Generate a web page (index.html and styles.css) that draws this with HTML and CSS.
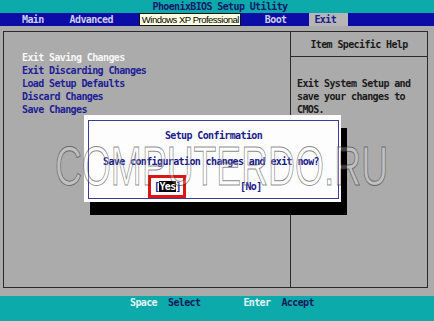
FILE: index.html
```html
<!DOCTYPE html>
<html lang="en">
<head>
    <meta charset="UTF-8">
    <meta name="viewport" content="width=device-width, initial-scale=1.0">
    <title>PhoenixBIOS Setup Utility</title>
    <link rel="stylesheet" href="styles.css">
</head>
<body>
    <div class="screen">
        <div class="title">PhoenixBIOS Setup Utility</div>
        <div class="menubar">
            <span class="tab tab-main">Main</span>
            <span class="tab tab-adv">Advanced</span>
            <span class="tooltip">Windows XP Professional</span>
            <span class="tab tab-boot">Boot</span>
            <span class="tab tab-exit">Exit</span>
        </div>
        <div class="body">
            <div class="panel">
                <div class="items">
                    <div class="item current">Exit Saving Changes</div>
                    <div class="item">Exit Discarding Changes</div>
                    <div class="item">Load Setup Defaults</div>
                    <div class="item">Discard Changes</div>
                    <div class="item">Save Changes</div>
                </div>
                <div class="help">
                    <div class="help-head">Item Specific Help</div>
                    <div class="help-text">
                        <div>Exit System Setup and</div>
                        <div>save your changes to</div>
                        <div>CMOS.</div>
                    </div>
                </div>
            </div>
        </div>
        <div class="keys">
            <span class="key key-space">Space</span>
            <span class="act act-select">Select</span>
            <span class="key key-enter">Enter</span>
            <span class="act act-accept">Accept</span>
        </div>

        <!-- окно подтверждения поверх экрана -->
        <div class="dialog">
            <div class="dialog-inner">
                <div class="dialog-title">Setup Confirmation</div>
                <div class="dialog-text">Save configuration changes and exit now?</div>
                <div class="dialog-buttons">
                    <span class="btn btn-yes">[<span class="sel">Yes</span>]</span>
                    <span class="btn btn-no">[No]</span>
                </div>
            </div>
        </div>

        <div class="watermark">COMPUTERDO.RU</div>
    </div>
</body>
</html>
```

FILE: styles.css
```css
body {
    margin: 0;
    padding: 0;
    background-color: #ababab;
    font-family: "DejaVu Sans Mono", "Liberation Mono", monospace;
    font-size: 10px;
    font-weight: bold;
    letter-spacing: -0.62px;
}
.screen {
    position: relative;
    width: 434px;
    height: 321px;
    overflow: hidden;
    background-color: #ababab;
}
.title {
    height: 13px;
    line-height: 13px;
    background-color: #0caaaa;
    color: #16186a;
    text-align: center;
    padding-left: 6px;
}
.menubar {
    height: 13px;
    line-height: 13px;
    background-color: #0c0ca6;
    display: flex;
    padding-left: 22px;
}
.tab {
    color: #cfcfe6;
    white-space: pre;
}
.tab-adv {
    margin-left: 26px;
}
.tab-boot {
    margin-left: 24px;
}
.tab-exit {
    margin-left: 23px;
    padding: 0 12px 0 5px;
    background-color: #b6b6b6;
    color: #1c1c8a;
}
.tooltip {
    margin-left: 26px;
    box-sizing: border-box;
    width: 102px;
    height: 13px;
    line-height: 11px;
    background-color: #ffffe1;
    border: 1px solid #111;
    color: #000;
    font-family: "Liberation Sans", Arial, sans-serif;
    font-weight: normal;
    font-size: 9.5px;
    letter-spacing: -0.5px;
    padding-left: 2px;
    white-space: nowrap;
    overflow: hidden;
}
.body {
    height: 270px;
    box-sizing: border-box;
    padding: 5px 6px 8px 3px;
}
.panel {
    height: 257px;
    box-sizing: border-box;
    border: 1px solid #2a2a2a;
    display: grid;
    grid-template-columns: 286px 1fr;
}
.items {
    padding: 19px 0 0 18px;
}
.item {
    height: 13px;
    line-height: 13px;
    color: #1e1e96;
}
.item.current {
    color: #f6f6f6;
}
.help {
    border-left: 1px solid #2a2a2a;
}
.help-head {
    height: 24px;
    line-height: 25px;
    text-align: center;
    color: #1a1a1a;
    border-bottom: 1px solid #2a2a2a;
}
.help-text {
    padding: 20px 0 0 6px;
    color: #1a1a1a;
    line-height: 13px;
}
.keys {
    height: 25px;
    line-height: 13px;
    background-color: #0caaaa;
    display: flex;
    padding-left: 130px;
}
.key {
    color: #e6f4f4;
}
.act {
    color: #15185e;
    margin-left: 11px;
}
.key-enter {
    margin-left: 43px;
}
.dialog {
    position: absolute;
    left: 84px;
    top: 115px;
    width: 257px;
    height: 87px;
    box-sizing: border-box;
    padding: 5px 2px 3px 4px;
    background-color: #fdfdfd;
    box-shadow: 6px 13px 0 #000;
}
.dialog-inner {
    height: 100%;
    box-sizing: border-box;
    border: 1px solid #3a3aa0;
    color: #1a1a8c;
    line-height: 13px;
}
.dialog-title {
    margin-top: 8px;
    text-align: center;
}
.dialog-text {
    margin-top: 13px;
    padding-left: 14px;
}
.dialog-buttons {
    margin-top: 12px;
    display: flex;
    padding-left: 64px;
}
.btn-yes {
    outline: 3px solid #e01414;
    outline-offset: 2px;
    padding: 0 0 0 1px;
}
.sel {
    background-color: #000;
    color: #fff;
}
.btn-no {
    margin-left: 59px;
}
.watermark {
    position: absolute;
    left: 55px;
    top: 138px;
    font-family: "Liberation Sans", Arial, sans-serif;
    font-weight: normal;
    font-size: 56px;
    line-height: 56px;
    letter-spacing: 0;
    color: rgba(255, 255, 255, 0.25);
    -webkit-text-stroke: 1px rgba(40, 40, 40, 0.55);
    transform: scaleX(0.665);
    transform-origin: left top;
    white-space: nowrap;
    pointer-events: none;
}
```
